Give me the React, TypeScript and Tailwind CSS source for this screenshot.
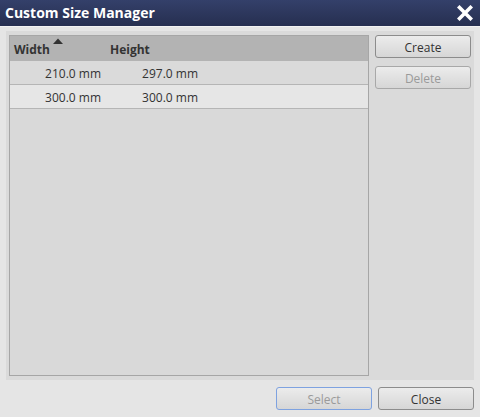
import React from "react";

const font = { fontFamily: '"Open Sans", "Noto Sans", sans-serif' };

function Btn({ label, disabled, focus }: { label: string; disabled?: boolean; focus?: boolean }) {
  return (
    <div
      className={`h-[23px] w-[96px] shrink-0 rounded-[3px] border flex items-center justify-center text-[12px] pt-[2px] bg-gradient-to-b from-[#ececec] to-[#d6d6d6] ${
        focus ? "border-[#7ea2e0]" : disabled ? "border-[#a8a8a8]" : "border-[#8c8c8c]"
      } ${disabled ? "text-[#9a9a9a]" : "text-[#333333]"}`}
    >
      {label}
    </div>
  );
}

export default function App() {
  const rows = [
    ["210.0 mm", "297.0 mm"],
    ["300.0 mm", "300.0 mm"],
  ];
  return (
    <div className="w-[480px] h-[417px] bg-[#e5e5e5] flex flex-col" style={font}>
      <div className="h-[27px] bg-gradient-to-b from-[#34406a] to-[#262f50] flex items-center justify-between pl-[5px] pr-[7px] border-b border-[#f2f2f2]">
        <span className="text-white font-bold text-[14px] leading-none">Custom Size Manager</span>
        <svg width="16" height="16" viewBox="0 0 16 16">
          <path d="M2.5 2.5 L13.5 13.5 M13.5 2.5 L2.5 13.5" stroke="white" strokeWidth="3.6" strokeLinecap="square" />
        </svg>
      </div>
      <div className="mx-[6px] mt-[4px] h-[349px] bg-[#dadada] flex pt-[4px] pb-[4px] pl-[3px] pr-[3px] gap-[6px]">
        <div className="w-[360px] shrink-0 border border-[#a6a6a6] bg-[#d9d9d9] flex flex-col text-[12px] text-[#333333]">
          <div className="h-[25px] bg-[#b3b3b3] flex items-center font-bold relative pt-[2px]">
            <span className="pl-[4px] w-[100px]">Width</span>
            <span>Height</span>
            <svg className="absolute left-[43px] top-[2px]" width="10" height="6" viewBox="0 0 10 6">
              <path d="M0 6 L5 0.5 L10 6 Z" fill="#333333" />
            </svg>
          </div>
          {rows.map((r, i) => (
            <div
              key={i}
              className={`h-[24px] flex items-center pt-[2px] border-b border-[#b5b5b5] ${i === 0 ? "bg-[#dadada]" : "bg-[#e6e6e6]"}`}
            >
              <span className="w-[91px] text-right">{r[0]}</span>
              <span className="w-[97px] text-right">{r[1]}</span>
            </div>
          ))}
        </div>
        <div className="flex flex-col gap-[8px]">
          <Btn label="Create" />
          <Btn label="Delete" disabled />
        </div>
      </div>
      <div className="flex justify-end gap-[6px] pr-[6px] mt-[7px]">
        <Btn label="Select" disabled focus />
        <Btn label="Close" />
      </div>
    </div>
  );
}
